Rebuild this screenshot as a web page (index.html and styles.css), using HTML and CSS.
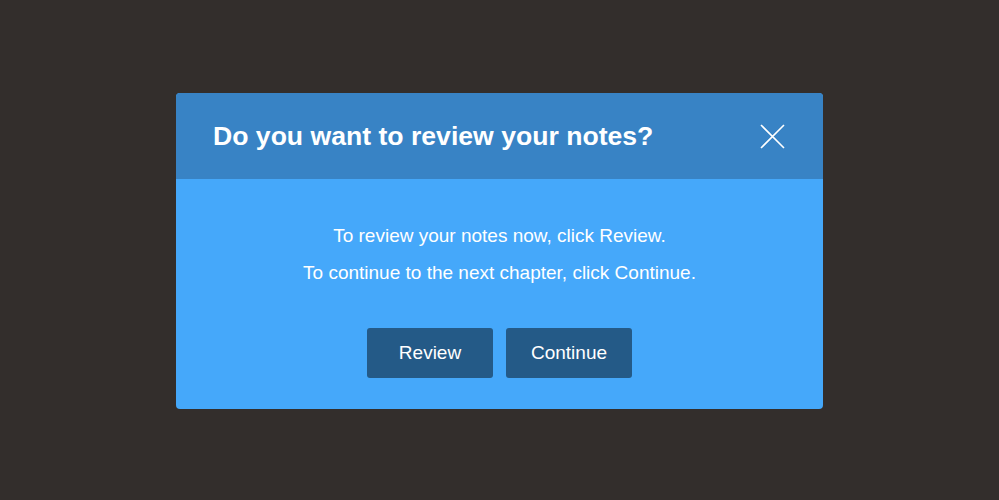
FILE: index.html
```html
<!DOCTYPE html>
<html>
	<head>
		<meta charset="UTF-8">
		<title>Review notes</title>
		<link rel="stylesheet" href="styles.css">
	</head>
	<body>
		<div class="overlay">
			<div class="dialog">
				<div class="dialog-head">
					<h2>Do you want to review your notes?</h2>
					<a href="javascript:;" class="close" title="Close">
						<svg width="25" height="25" viewBox="0 0 25 25">
							<path d="M1 1L24 24M24 1L1 24" stroke="#fff" stroke-width="1.6" fill="none" />
						</svg>
					</a>
				</div>
				<div class="dialog-body">
					<p>To review your notes now, click Review.</p>
					<p>To continue to the next chapter, click Continue.</p>
					<div class="btns">
						<a href="javascript:;" class="btn">Review</a>
						<a href="javascript:;" class="btn">Continue</a>
					</div>
				</div>
			</div>
		</div>
	</body>
</html>
```

FILE: styles.css
```css
* {
	margin: 0;
	padding: 0;
}

html,
body {
	height: 100%;
}

body {
	background: #332e2c;
	font-family: "Liberation Sans", Arial, sans-serif;
	color: #fff;
}

a {
	cursor: pointer;
	outline: none;
	text-decoration: none;
	color: #fff;
}

.overlay {
	height: 100%;
	display: flex;
	justify-content: center;
	align-items: flex-start;
	padding-top: 93px;
	box-sizing: border-box;
}

.dialog {
	width: 647px;
	border-radius: 4px;
	overflow: hidden;
	background: #45a8fa;
}

.dialog-head {
	height: 86px;
	background: #3883c5;
	display: flex;
	align-items: center;
	justify-content: space-between;
	padding: 0 38px 0 37px;
}

.dialog-head h2 {
	font-size: 26.6px;
	font-weight: bold;
}

.close {
	display: flex;
	width: 25px;
	height: 25px;
}

.dialog-body {
	padding: 38px 0 31px;
	text-align: center;
	font-size: 19px;
}

.dialog-body p {
	line-height: 37px;
}

.btns {
	display: flex;
	justify-content: center;
	gap: 13px;
	margin-top: 37px;
}

.btn {
	width: 126px;
	height: 50px;
	line-height: 50px;
	background: #245a87;
	border-radius: 3px;
	font-size: 19px;
}
```
